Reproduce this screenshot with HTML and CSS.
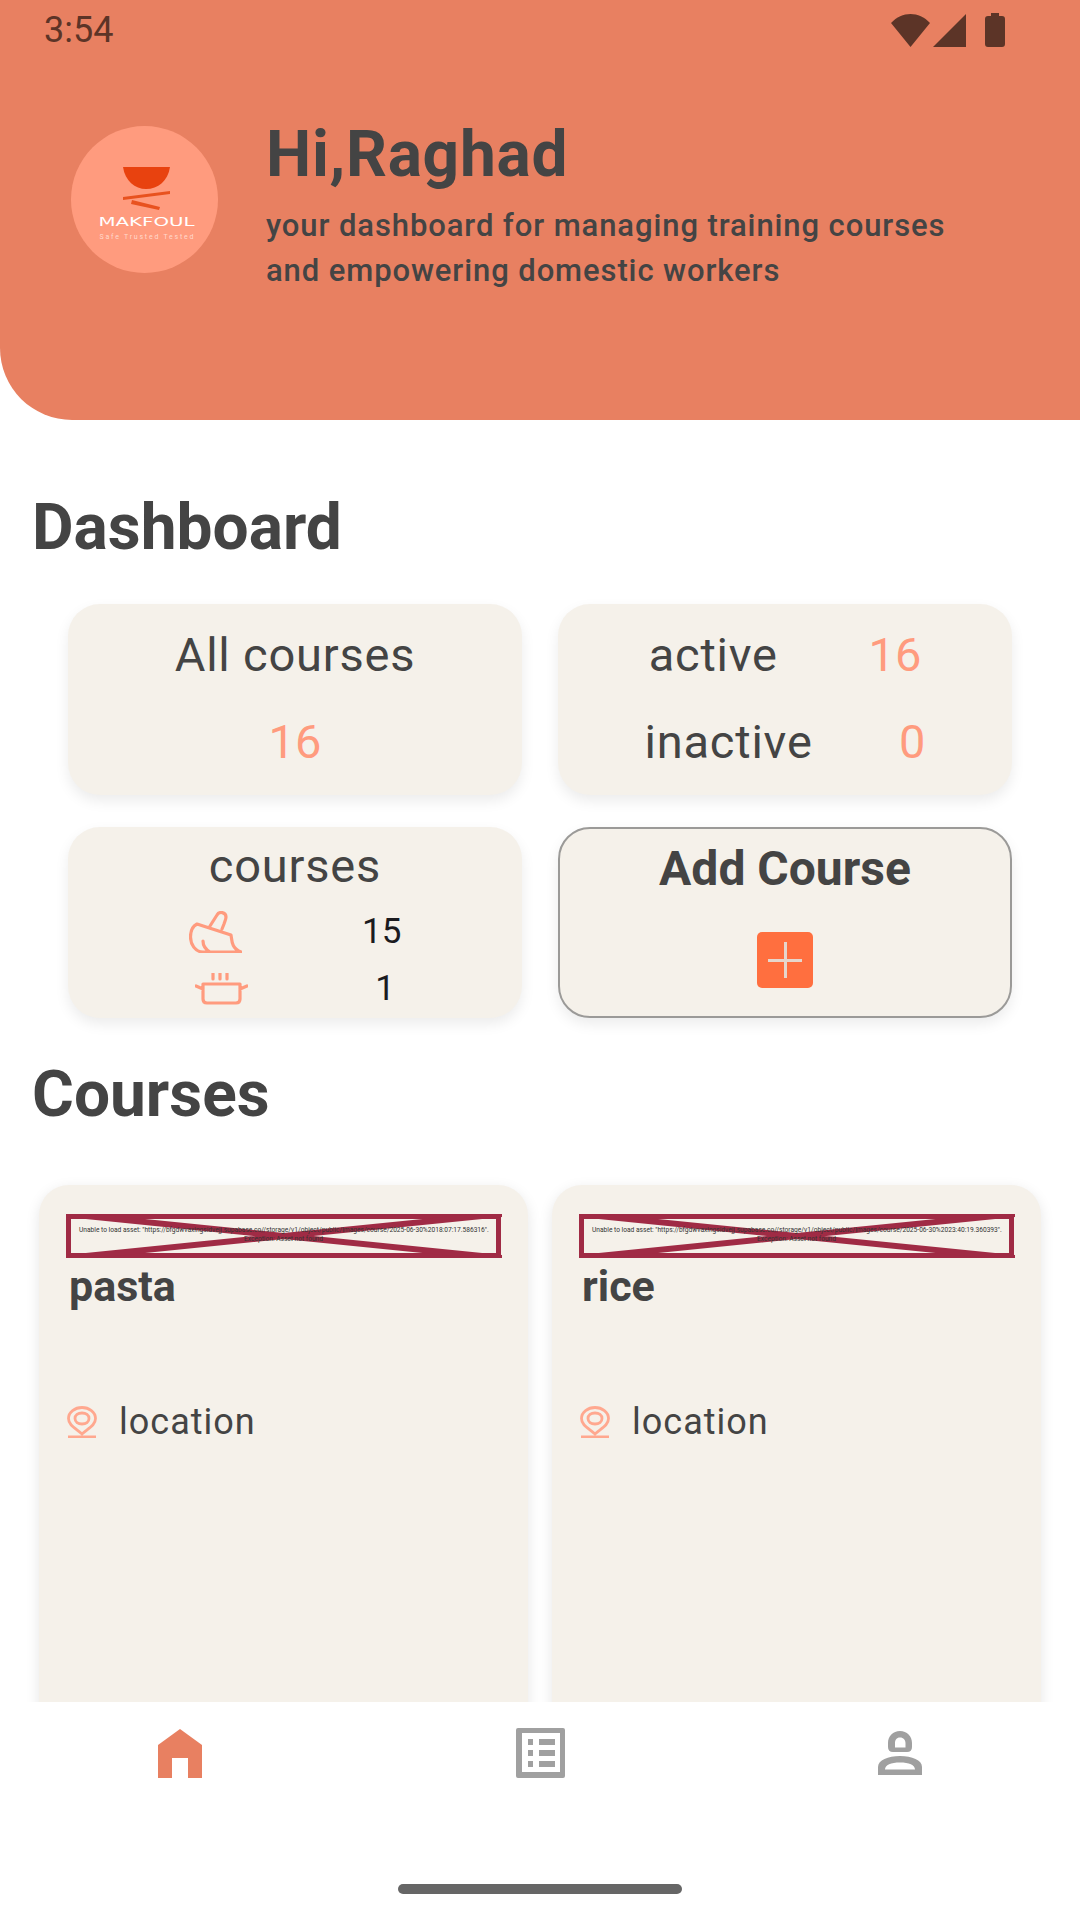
FILE: index.html
```html
<!DOCTYPE html>
<html lang="en">
<head>
    <meta charset="UTF-8">
    <meta name="viewport" content="width=device-width, initial-scale=1.0">
    <title>Makfoul dashboard</title>
    <link rel="stylesheet" href="styles.css">
</head>
<body>
    <div class="app">
        <header class="header">
            <div class="status-bar">
                <span class="status-time">3:54</span>
                <div class="status-icons">
                    <svg width="39" height="33" viewBox="0 0 39 33"><path d="M0 9 C11 -3 28 -3 39 9 L19.500 33 Z"/></svg>
                    <svg width="33" height="33" viewBox="0 0 33 33"><path d="M33 0 V33 H0 Z"/></svg>
                    <svg class="status-battery" width="20" height="34" viewBox="0 0 20 34"><path d="M6 0 H14 V3 H17 Q20 3 20 6 V31 Q20 34 17 34 H3 Q0 34 0 31 V6 Q0 3 3 3 H6 Z"/></svg>
                </div>
            </div>
            <div class="profile">
                <div class="avatar">
                    <svg width="147" height="147" viewBox="0 0 147 147">
                        <path class="logo-bowl" d="M52 41 H99 C97 55 87 63 75 63 C64 63 54 55 52 41 Z"/>
                        <path class="logo-stick" d="M52 71 L99 65 L99 68 L52 74 Z"/>
                        <path class="logo-stick" d="M61 74 L89 81 L88 84 L60 78 Z"/>
                        <text class="logo-name" x="75.500" y="100" text-anchor="middle" textLength="96" lengthAdjust="spacingAndGlyphs">MAKFOUL</text>
                        <text class="logo-tag" x="75.500" y="113" text-anchor="middle" textLength="94">Safe Trusted Tested</text>
                    </svg>
                </div>
                <div class="greeting">
                    <h1>Hi,Raghad</h1>
                    <p>your dashboard for managing training courses<br>and empowering domestic workers</p>
                </div>
            </div>
        </header>

        <main class="content">
            <h2 class="section-title">Dashboard</h2>
            <div class="stats">
                <div class="stat-card">
                    <div class="stat-row"><span class="stat-label">All courses</span></div>
                    <div class="stat-row"><span class="stat-value">16</span></div>
                </div>
                <div class="stat-card">
                    <div class="stat-row"><span class="stat-label">active</span><span class="stat-value">16</span></div>
                    <div class="stat-row"><span class="stat-label">inactive</span><span class="stat-value">0</span></div>
                </div>
                <div class="stat-card types">
                    <div class="stat-row"><span class="stat-label">courses</span></div>
                    <div class="type-row">
                        <svg class="type-icon" width="53" height="42" viewBox="0 0 53 42">
                            <path d="M21 15 L28 4 C30 0 37 1 37 6 C37 8 36 10 35 13 L33 18 M8 13 L42 24 C43 29 42 37 52 41 H14 C6 41 1.500 33 1.500 26 C1.500 20 4 15 8 13 Z M14 30 C14 34 16 38 21 41"/>
                        </svg>
                        <span class="type-count">15</span>
                    </div>
                    <div class="type-row">
                        <svg class="type-icon" width="53" height="32" viewBox="0 0 53 32">
                            <path d="M8 11 H45 V26 Q45 30 41 30 H12 Q8 30 8 26 Z M1 13 L8 16 M52 13 L45 16 M18 0.500 V6 M25 0.500 V6 M32 0.500 V6"/>
                        </svg>
                        <span class="type-count">1</span>
                    </div>
                </div>
                <div class="stat-card add-card">
                    <div class="stat-row"><span class="add-label">Add Course</span></div>
                    <div class="add-button"></div>
                </div>
            </div>

            <h2 class="section-title courses-title">Courses</h2>
            <div class="course-grid">
                <div class="course-card">
                    <div class="broken-image">
                        <svg class="broken-cross" preserveAspectRatio="none" viewBox="0 0 436 44"><path d="M0 0 L436 44 M436 0 L0 44"/></svg>
                        <p>Unable to load asset: "https://bfgdwvaxingsidvejj.supabase.co//storage/v1/object/public/images/course/2025-06-30%2018:07:17.586316".<br>Exception: Asset not found</p>
                    </div>
                    <h3>pasta</h3>
                    <div class="course-location">
                        <svg width="30" height="32" viewBox="0 0 30 32"><path d="M15 28 C8 22 1.500 19 1.500 12.500 C1.500 6 8 1.500 15 1.500 C22 1.500 28.500 6 28.500 12.500 C28.500 19 22 22 15 28 Z M15 7 C11 7 8 9 8 12.500 C8 16 11 18 15 18 C19 18 22 16 22 12.500 C22 9 19 7 15 7 Z M1 31 H29"/></svg>
                        <span>location</span>
                    </div>
                </div>
                <div class="course-card">
                    <div class="broken-image">
                        <svg class="broken-cross" preserveAspectRatio="none" viewBox="0 0 436 44"><path d="M0 0 L436 44 M436 0 L0 44"/></svg>
                        <p>Unable to load asset: "https://bfgdwvaxingsidvejj.supabase.co//storage/v1/object/public/images/course/2025-06-30%2023:40:19.360393".<br>Exception: Asset not found</p>
                    </div>
                    <h3>rice</h3>
                    <div class="course-location">
                        <svg width="30" height="32" viewBox="0 0 30 32"><path d="M15 28 C8 22 1.500 19 1.500 12.500 C1.500 6 8 1.500 15 1.500 C22 1.500 28.500 6 28.500 12.500 C28.500 19 22 22 15 28 Z M15 7 C11 7 8 9 8 12.500 C8 16 11 18 15 18 C19 18 22 16 22 12.500 C22 9 19 7 15 7 Z M1 31 H29"/></svg>
                        <span>location</span>
                    </div>
                </div>
            </div>
        </main>

        <nav class="bottom-nav">
            <div class="nav-items">
                <div class="nav-item active">
                    <svg width="44" height="49" viewBox="0 0 44 49"><path d="M0 16 L22 0 L44 16 V49 H30 V29 H14 V49 H0 Z"/></svg>
                </div>
                <div class="nav-item">
                    <svg width="49" height="50" viewBox="0 0 49 50"><path fill-rule="evenodd" d="M2 0 H47 Q49 0 49 2 V48 Q49 50 47 50 H2 Q0 50 0 48 V2 Q0 0 2 0 Z M6 5 V44 H44 V5 Z M12 11 H17 V17 H12 Z M23 11 H39 V17 H23 Z M12 22 H17 V28 H12 Z M23 22 H39 V28 H23 Z M12 33 H17 V39 H12 Z M23 33 H39 V39 H23 Z"/></svg>
                </div>
                <div class="nav-item">
                    <svg width="44" height="44" viewBox="0 0 44 44"><path fill-rule="evenodd" d="M22 0 C29 0 34 5 34 12 V16 Q34 21 29 21 H15 Q10 21 10 16 V12 C10 5 15 0 22 0 Z M22 6.500 C18.500 6.500 17 9 17 12 V16.500 H27.500 V12 C27.500 9 25.500 6.500 22 6.500 Z M22 25 C34 25 44 29 44 36 V44 H0 V36 C0 29 10 25 22 25 Z M22 31.500 C13 31.500 7 34 7 38.500 H37 C37 34 31 31.500 22 31.500 Z"/></svg>
                </div>
            </div>
            <div class="home-indicator"></div>
        </nav>
    </div>
</body>
</html>
```

FILE: styles.css
```css
* {
    margin: 0;
    padding: 0;
    box-sizing: border-box;
}

body {
    font-family: Roboto, 'Noto Sans', sans-serif;
    background: #fff;
    color: #444;
}

.app {
    width: 1080px;
    height: 1920px;
    display: flex;
    flex-direction: column;
    overflow: hidden;
}

/* header */
.header {
    height: 420px;
    flex-shrink: 0;
    background: #e88061;
    border-bottom-left-radius: 72px;
}

.status-bar {
    height: 60px;
    padding: 0 75px 0 44px;
    display: flex;
    justify-content: space-between;
    align-items: center;
    color: #5c3427;
}

.status-time {
    font-size: 36px;
}

.status-icons {
    display: flex;
    align-items: center;
    gap: 3px;
}

.status-icons svg {
    fill: #5c3427;
}

.status-icons .status-battery {
    margin-left: 16px;
}

.profile {
    display: flex;
    align-items: flex-start;
    gap: 48px;
    padding: 59px 0 0 71px;
}

.avatar {
    width: 147px;
    height: 147px;
    margin-top: 7px;
    flex-shrink: 0;
    border-radius: 50%;
    background: #ff9b7e;
}

.logo-bowl {
    fill: #e8420f;
}

.logo-stick {
    fill: #e8521f;
}

.logo-name {
    fill: #fff;
    font-family: 'DejaVu Sans', sans-serif;
    font-size: 13px;
}

.logo-tag {
    fill: #ffd9cc;
    font-size: 7px;
}

.greeting h1 {
    font-size: 64px;
    font-weight: 700;
    line-height: 72px;
    letter-spacing: 0.7px;
}

.greeting p {
    margin-top: 12px;
    font-size: 31px;
    font-weight: 500;
    line-height: 45px;
    letter-spacing: 0.9px;
}

/* content */
.content {
    flex: 1;
    min-height: 0;
    overflow: hidden;
}

.section-title {
    padding: 73px 0 0 32px;
    font-size: 64px;
    font-weight: 700;
    line-height: 70px;
}

.stats {
    display: grid;
    grid-template-columns: 454px 454px;
    grid-auto-rows: 191px;
    column-gap: 36px;
    row-gap: 32px;
    margin: 41px 0 0 68px;
}

.stat-card {
    display: flex;
    flex-direction: column;
    padding-top: 23px;
    background: #f5f1ea;
    border-radius: 32px;
    box-shadow: 0 6px 14px rgba(0, 0, 0, 0.08);
}

.stat-row {
    height: 87px;
    flex-shrink: 0;
    display: flex;
    justify-content: space-evenly;
    padding-bottom: 33px;
    align-items: center;
}

.stat-label {
    font-size: 47px;
    font-weight: 450;
    letter-spacing: 0.8px;
}

.stat-value {
    font-size: 47px;
    font-weight: 450;
    color: #ff9b7e;
}

.types {
    padding-top: 11px;
}

.types .stat-row {
    height: 54px;
    padding-bottom: 0;
}

.type-row {
    display: flex;
    justify-content: space-evenly;
    align-items: center;
    height: 57px;
}

.types .stat-row + .type-row {
    margin-top: 11px;
}

.type-row svg {
    flex-shrink: 0;
}

.type-icon {
    fill: none;
    stroke: #ff9b7e;
    stroke-width: 3.200;
    stroke-linecap: round;
    stroke-linejoin: round;
}

.type-count {
    font-size: 35px;
    color: #1b1b1f;
}

.add-card {
    padding-top: 12px;
    align-items: center;
    border: 2px solid #9b9a98;
}

.add-card .stat-row {
    height: 54px;
    padding-bottom: 0;
}

.add-label {
    font-size: 48px;
    font-weight: 700;
}

.add-button {
    position: relative;
    width: 56px;
    height: 56px;
    margin-top: 37px;
    border-radius: 5px;
    background: #ff6f3f;
    filter: blur(0.5px);
}

.add-button::before,
.add-button::after {
    content: "";
    position: absolute;
    background: #e6d6cc;
}

.add-button::before {
    left: 11px;
    right: 11px;
    top: 27px;
    height: 3px;
}

.add-button::after {
    top: 10px;
    bottom: 10px;
    left: 27px;
    width: 3px;
}

.section-title.courses-title {
    padding-top: 42px;
}

.course-grid {
    display: grid;
    grid-template-columns: 489px 489px;
    column-gap: 24px;
    margin: 55px 0 0 39px;
}

.course-card {
    height: 600px;
    padding: 29px 27px;
    background: #f5f1ea;
    border-radius: 30px;
    box-shadow: 0 4px 14px rgba(0, 0, 0, 0.1);
}

.broken-image {
    position: relative;
    height: 44px;
    padding: 7px 8px 0;
    border: 5px solid #a02b45;
}

.broken-cross {
    position: absolute;
    top: -5px;
    left: -5px;
    width: 436px;
    height: 44px;
    fill: none;
    stroke: #a02b45;
    stroke-width: 6;
}

.broken-image p {
    position: relative;
    font-size: 6.630px;
    line-height: 9px;
    text-align: center;
    color: #333;
    white-space: nowrap;
}

.course-card h3 {
    margin-top: 5px;
    padding-left: 3px;
    font-size: 43px;
    font-weight: 700;
    line-height: 46px;
}

.course-location {
    display: flex;
    align-items: center;
    gap: 22px;
    margin-top: 92px;
    padding-left: 1px;
}

.course-location svg {
    fill: none;
    stroke: #ffa88f;
    stroke-width: 2.800;
}

.course-location span {
    font-size: 36px;
    letter-spacing: 1px;
}

/* bottom nav */
.bottom-nav {
    position: relative;
    height: 218px;
    flex-shrink: 0;
    background: #fff;
}

.nav-items {
    display: grid;
    grid-template-columns: repeat(3, 1fr);
    padding-top: 26px;
}

.nav-item {
    display: flex;
    justify-content: center;
    align-items: center;
    height: 50px;
}

.nav-item svg {
    fill: #a0a0a0;
}

.nav-item.active svg {
    fill: #e88061;
}

.home-indicator {
    position: absolute;
    left: 398px;
    top: 182px;
    width: 284px;
    height: 10px;
    border-radius: 5px;
    background: #666;
}
```
